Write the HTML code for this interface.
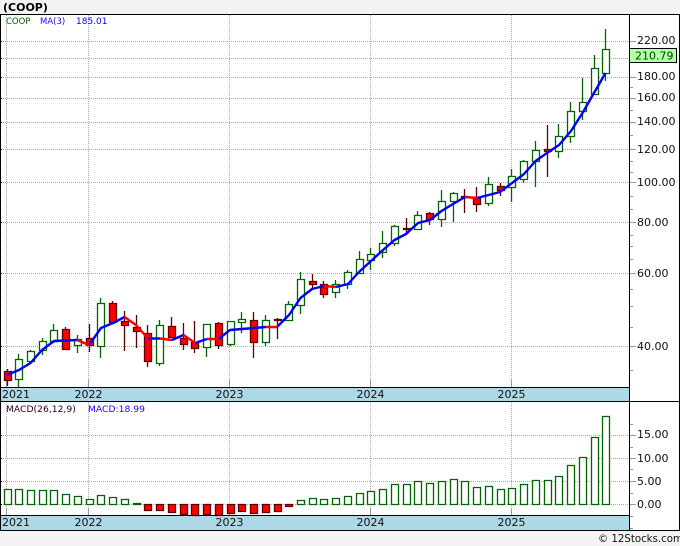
<!DOCTYPE html>
<html><head><meta charset="utf-8"><title>COOP</title>
<style>
html,body{margin:0;padding:0;background:#f3f3f3}
svg{display:block}
text{font-family:"DejaVu Sans",sans-serif}
</style></head><body>
<svg xmlns="http://www.w3.org/2000/svg" width="680" height="546" viewBox="0 0 680 546">
<rect width="680" height="546" fill="#f3f3f3"/>
<rect x="0" y="14" width="680" height="517" fill="#fff"/>
<rect x="0" y="388" width="629" height="13" fill="#add8e6"/>
<rect x="0" y="516" width="629" height="14" fill="#add8e6"/>
<g fill="none" stroke="#aaa" stroke-dasharray="1 1" shape-rendering="crispEdges">
<path d="M1 41.5H629M1 58.5H629M1 77.5H629M1 98.5H629M1 122.5H629M1 149.5H629M1 182.5H629M1 222.5H629M1 273.5H629M1 346.5H629M1 435.5H629M1 458.5H629M1 481.5H629M1 504.5H629"/>
<path d="M6.5 15V387M88.5 15V387M229.5 15V387M370.5 15V387M511.5 15V387M6.5 402V515M88.5 402V515M229.5 402V515M370.5 402V515M511.5 402V515"/>
</g>
<g fill="none" stroke="#999" shape-rendering="crispEdges">
<path d="M6.5 380V387M88.5 380V387M229.5 380V387M370.5 380V387M511.5 380V387M6.5 508V515M88.5 508V515M229.5 508V515M370.5 508V515M511.5 508V515"/>
<path d="M630 41.5H636M630 58.5H636M630 77.5H636M630 98.5H636M630 122.5H636M630 149.5H636M630 182.5H636M630 222.5H636M630 273.5H636M630 346.5H636M630 435.5H636M630 458.5H636M630 481.5H636M630 504.5H636"/>
<path d="M630 87.5H633M630 110.5H633M630 135.5H633M630 161.5H633M630 172.5H633M630 196.5H633M630 209.5H633M630 235.5H633M630 246.5H633M630 259.5H633M630 289.5H633M630 306.5H633M630 327.5H633M630 370.5H633M630 424.5H633M630 447.5H633M630 469.5H633M630 493.5H633M630 516.5H633M630 528.5H633"/>
</g>
<!-- green candles -->
<g fill="#fff" stroke="#006400" stroke-width="1.3">
<path d="M18.5 354V387M30.5 350V363M42.5 338V355M53.5 324V343M77.5 335V353M100.5 298V358M159.5 320V366M206.5 324V357M230.5 321V346M241.5 312V333M265.5 315V346M288.5 301V320M300.5 272V314M335.5 280V298M347.5 270V289M359.5 251V273M370.5 248V270M382.5 231V258M394.5 225V246M417.5 211V230M441.5 190V227M453.5 192V222M488.5 177V206M511.5 169V202M523.5 160V183M535.5 141V187M558.5 124V158M570.5 102V143M582.5 78V120M594.5 55V94M605.5 29V81"/>
<path transform="translate(.5 0)" d="M15 359.5h7V379.5h-7zM27 351.5h7V361.5h-7zM39 341.5h7V350.5h-7zM50 330.5h7V341.5h-7zM74 339.5h7V345.5h-7zM97 303.5h7V346.5h-7zM156 325.5h7V363.5h-7zM203 324.5h7V347.5h-7zM227 321.5h7V344.5h-7zM238 319.5h7V322.5h-7zM262 320.5h7V342.5h-7zM285 304.5h7V320.5h-7zM297 279.5h7V305.5h-7zM332 284.5h7V292.5h-7zM344 272.5h7V284.5h-7zM356 259.5h7V273.5h-7zM367 254.5h7V260.5h-7zM379 243.5h7V252.5h-7zM391 226.5h7V243.5h-7zM414 215.5h7V229.5h-7zM438 201.5h7V219.5h-7zM450 193.5h7V201.5h-7zM485 184.5h7V203.5h-7zM508 176.5h7V187.5h-7zM520 161.5h7V179.5h-7zM532 150.5h7V161.5h-7zM555 136.5h7V151.5h-7zM567 111.5h7V136.5h-7zM579 102.5h7V111.5h-7zM591 68.5h7V94.5h-7zM602 49.5h7V73.5h-7z"/>
</g>
<!-- red candles -->
<g fill="#ff0000" stroke="#600000" stroke-width="1.3">
<path d="M7.5 369V386M65.5 327V349M89.5 324V352M112.5 301V322M124.5 311V351M136.5 315V348M147.5 325V367M171.5 317V337M183.5 323V350M194.5 321V353M218.5 322V349M253.5 312V358M277.5 318V339M312.5 274V289M323.5 281V298M406.5 218V235M429.5 212V225M464.5 189V213M476.5 187V212M500.5 183V196M547.5 125V177"/>
<path transform="translate(.5 0)" d="M4 371.5h7V380.5h-7zM62 329.5h7V349.5h-7zM86 338.5h7V345.5h-7zM109 303.5h7V322.5h-7zM121 321.5h7V325.5h-7zM133 327.5h7V331.5h-7zM144 333.5h7V361.5h-7zM168 326.5h7V337.5h-7zM180 338.5h7V344.5h-7zM191 342.5h7V348.5h-7zM215 323.5h7V345.5h-7zM250 320.5h7V342.5h-7zM274 319.5h7V320.5h-7zM309 281.5h7V284.5h-7zM320 284.5h7V294.5h-7zM403 228.5h7V229.5h-7zM426 213.5h7V219.5h-7zM461 196.5h7V197.5h-7zM473 198.5h7V204.5h-7zM497 186.5h7V190.5h-7zM544 149.5h7V151.5h-7z"/>
</g>
<!-- moving average -->
<path fill="none" stroke="#0000ff" stroke-width="2.4" stroke-linejoin="round" d="M7 375L19 370L30.5 363L42 350L54 341L66 340.5L77 340M89 345L101 328L113 323L124.5 317M148 338.5L160 338.5M172 340L183.5 335M195 343L207 339M218.5 339L230 330L242 329L254 328L265.5 327M277 327L289 315L300.5 298L312 289L324 286M336 287L348 284L359 272L371 261L383 250L394.5 240L406 234L418 223L430 220L441.5 211L453 204L465 197M477 198L488.5 195L500 192L512 183L524 174L535.5 161L547 153L559 145L571 131L582.5 113L594 93L605.5 73"/>
<path fill="none" stroke="#ff0000" stroke-width="2.4" stroke-linejoin="round" d="M77 340L89 345M124.5 317L136 325L148 338.5M160 338.5L172 340M183.5 335L195 343M207 339L218.5 339M265.5 327L277 327M324 286L336 287M465 197L477 198"/>
<!-- MACD bars -->
<g fill="#fff" stroke="#006400" stroke-width="1.3" transform="translate(.5 0)">
<path d="M4 489.5h7V504.5h-7zM15 489.5h7V504.5h-7zM27 490.5h7V504.5h-7zM39 490.5h7V504.5h-7zM50 490.5h7V504.5h-7zM62 494.5h7V504.5h-7zM74 496.5h7V504.5h-7zM86 499.5h7V504.5h-7zM97 495.5h7V504.5h-7zM109 497.5h7V504.5h-7zM121 499.5h7V504.5h-7zM133 503.5h7V504.5h-7zM297 500.5h7V504.5h-7zM309 498.5h7V504.5h-7zM320 499.5h7V504.5h-7zM332 498.5h7V504.5h-7zM344 496.5h7V504.5h-7zM356 493.5h7V504.5h-7zM367 491.5h7V504.5h-7zM379 489.5h7V504.5h-7zM391 484.5h7V504.5h-7zM403 484.5h7V504.5h-7zM414 481.5h7V504.5h-7zM426 483.5h7V504.5h-7zM438 481.5h7V504.5h-7zM450 479.5h7V504.5h-7zM461 481.5h7V504.5h-7zM473 487.5h7V504.5h-7zM485 486.5h7V504.5h-7zM497 489.5h7V504.5h-7zM508 488.5h7V504.5h-7zM520 484.5h7V504.5h-7zM532 480.5h7V504.5h-7zM544 480.5h7V504.5h-7zM555 476.5h7V504.5h-7zM567 465.5h7V504.5h-7zM579 457.5h7V504.5h-7zM591 437.5h7V504.5h-7zM602 416.5h7V504.5h-7z"/>
</g>
<g fill="#ff0000" stroke="#600000" stroke-width="1.3" transform="translate(.5 0)">
<path d="M144 504.5h7V510.5h-7zM156 504.5h7V510.5h-7zM168 504.5h7V512.5h-7zM180 504.5h7V514.5h-7zM191 504.5h7V515.5h-7zM203 504.5h7V514.5h-7zM215 504.5h7V515.5h-7zM227 504.5h7V513.5h-7zM238 504.5h7V511.5h-7zM250 504.5h7V513.5h-7zM262 504.5h7V512.5h-7zM274 504.5h7V511.5h-7zM285 504.5h7V506.5h-7z"/>
</g>
<!-- frame -->
<g fill="none" stroke="#000" shape-rendering="crispEdges">
<path d="M0 14.5H680M0.5 14V531M0 387.5H629M0 401.5H680M0 515.5H629M0 530.5H680M629.5 14V531M679.5 14V531"/>
<path d="M1 41.5H2M1 58.5H2M1 77.5H2M1 98.5H2M1 122.5H2M1 149.5H2M1 182.5H2M1 222.5H2M1 273.5H2M1 346.5H2M1 435.5H2M1 458.5H2M1 481.5H2M1 504.5H2"/>
</g>
<!-- title + legend -->
<text x="3" y="11" font-size="11" font-weight="700" fill="#000">(COOP)</text>
<text x="6" y="24" font-size="8.5" fill="#006400">COOP</text>
<text x="40" y="24" font-size="8.5" fill="#3300ee">MA(3)</text>
<text x="76" y="24" font-size="9" fill="#0000ff">185.01</text>
<text x="6" y="412" font-size="9.2" fill="#220022">MACD(26,12,9)</text>
<text x="88" y="412" font-size="9.2" fill="#2200ff">MACD:18.99</text>
<!-- right axis -->
<g font-size="11" fill="#111">
<text x="637" y="44">220.00</text>
<text x="637" y="80">180.00</text>
<text x="637" y="101">160.00</text>
<text x="637" y="125">140.00</text>
<text x="637" y="153">120.00</text>
<text x="637" y="186">100.00</text>
<text x="637" y="226">80.00</text>
<text x="637" y="277">60.00</text>
<text x="637" y="350">40.00</text>
<text x="637" y="438">15.00</text>
<text x="637" y="462">10.00</text>
<text x="637" y="485">5.00</text>
<text x="637" y="508">0.00</text>
</g>
<path d="M629.5 48.5H676.5V62.5H629.5Z" fill="#b4ffa8" stroke="#000" shape-rendering="crispEdges"/>
<text x="635" y="59.5" font-size="11" fill="#004400">210.79</text>
<!-- year labels -->
<g font-size="11" fill="#111">
<text x="2" y="398">2021</text>
<text x="88.5" y="398" text-anchor="middle">2022</text>
<text x="229.5" y="398" text-anchor="middle">2023</text>
<text x="370.5" y="398" text-anchor="middle">2024</text>
<text x="511.5" y="398" text-anchor="middle">2025</text>
<text x="2" y="526">2021</text>
<text x="88.5" y="526" text-anchor="middle">2022</text>
<text x="229.5" y="526" text-anchor="middle">2023</text>
<text x="370.5" y="526" text-anchor="middle">2024</text>
<text x="511.5" y="526" text-anchor="middle">2025</text>
</g>
<text x="598" y="542" font-size="10.2" fill="#111">© 12Stocks.com</text>
</svg>
</body></html>
